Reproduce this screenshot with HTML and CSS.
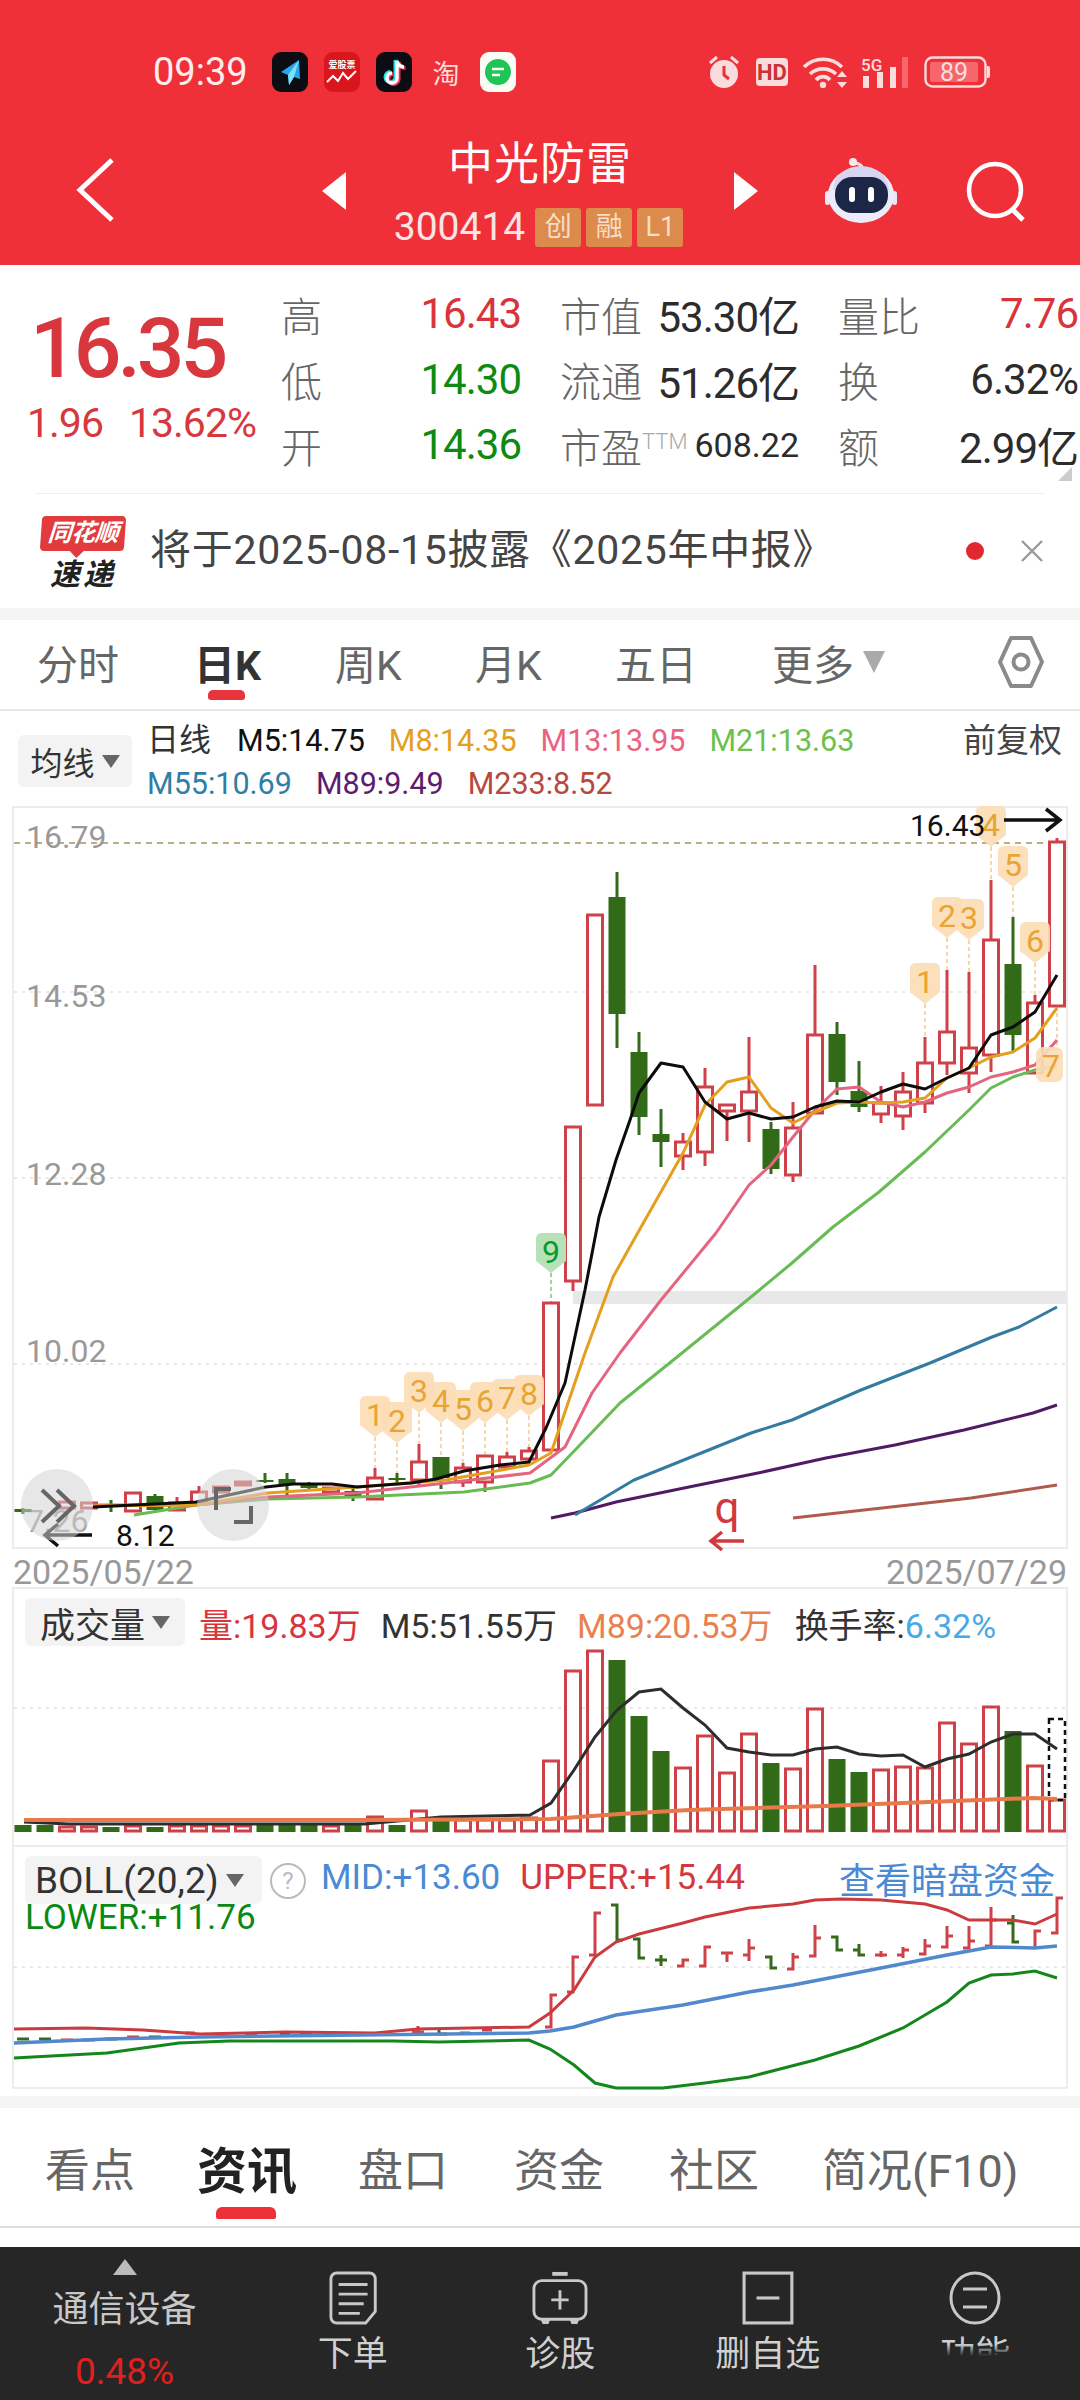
FILE: index.html
```html
<!DOCTYPE html>
<html lang="zh">
<head>
<meta charset="utf-8">
<title>中光防雷</title>
<link rel="stylesheet" href="styles.css">
</head>
<body>
<div class="app">
  <header class="top">
    <div class="status">
      <span class="clock">09:39</span>
      <div class="notif">
        <svg class="nicon" viewBox="0 0 36 40"><rect width="36" height="40" rx="9" fill="#0b0d12"/><path d="M27 8 9 20l7 3 1 10 5-8 6 2z" fill="#29a5ee"/><path d="M27 8 16 23l1 10 5-8z" fill="#7fe0f5"/></svg>
        <svg class="nicon" viewBox="0 0 36 40"><rect width="36" height="40" rx="9" fill="#d8161c"/><text x="18" y="16" class="ni-text">爱股票</text><path d="M3 30l6-6 5 5 5-8 5 6 8-8" fill="none" stroke="#fff" stroke-width="2"/></svg>
        <svg class="nicon" viewBox="0 0 36 40"><rect width="36" height="40" rx="9" fill="#0b0d12"/><path d="M21 9v17a5 5 0 1 1-5-5M21 9c1 4 4 6 7 6" fill="none" stroke="#25e0e8" stroke-width="4" transform="translate(-1.5 -1)"/><path d="M21 9v17a5 5 0 1 1-5-5M21 9c1 4 4 6 7 6" fill="none" stroke="#f0325a" stroke-width="4" transform="translate(1.5 1)"/><path d="M21 9v17a5 5 0 1 1-5-5M21 9c1 4 4 6 7 6" fill="none" stroke="#fff" stroke-width="3.4"/></svg>
        <span class="tao">淘</span>
        <svg class="nicon" viewBox="0 0 36 40"><rect width="36" height="40" rx="9" fill="#fbfbf6"/><circle cx="18" cy="20" r="13" fill="#1ec455"/><path d="M12 17h12M12 23h8" stroke="#fff" stroke-width="2.4"/></svg>
      </div>
      <div class="sys">
        <svg class="s-alarm" viewBox="0 0 32 34"><circle cx="16" cy="19" r="14" fill="#fbdcdc"/><path d="M16 11v9l5 4" fill="none" stroke="#ef3038" stroke-width="3"/><path d="M2 8 9 2M30 8 23 2" stroke="#fbdcdc" stroke-width="3" fill="none"/></svg>
        <svg class="s-hd" viewBox="0 0 32 28"><rect width="32" height="28" rx="4" fill="#fbdcdc"/><text x="16" y="22" class="hd-text">HD</text></svg>
        <svg class="s-wifi" viewBox="0 0 45 32"><path d="M1 11a27 27 0 0 1 38 0M7 18a19 19 0 0 1 26 0M13 24a9 9 0 0 1 14 0" fill="none" stroke="#fbdcdc" stroke-width="3.6"/><circle cx="20" cy="29" r="3.2" fill="#fbdcdc"/><path d="M39 15l5 6H34zM39 32l5-6H34z" fill="#fbdcdc"/></svg>
        <svg class="s-sig" viewBox="0 0 47 32"><text x="0" y="15" class="sig-text">5G</text><path d="M2 20h6v12H2zM16 16h6v16h-6zM29 11h6v21h-6z" fill="#fbdcdc"/><path d="M41 1h6v31h-6z" fill="#f6666c"/></svg>
        <svg class="s-bat" viewBox="0 0 66 32"><rect x="1.5" y="1.5" width="60" height="29" rx="7" fill="none" stroke="#fbdcdc" stroke-width="2.4"/><rect x="6" y="6" width="48" height="20" rx="2" fill="#f6666c"/><path d="M63 10h1a2 2 0 0 1 2 2v8a2 2 0 0 1-2 2h-1z" fill="#fbdcdc"/><text x="30" y="25" class="bat-text">89</text></svg>
      </div>
    </div>
    <nav class="nav">
      <div class="nav-left">
        <svg class="back" viewBox="0 0 40 64"><path d="M36 2 4 32l32 30" fill="none" stroke="#fff" stroke-width="5"/></svg>
      </div>
      <div class="nav-center">
        <span class="tri tri-l"></span>
        <div class="name">
          <div class="title">中光防雷</div>
          <div class="code-row">
            <span class="code">300414</span>
            <span class="tag">创</span><span class="tag">融</span><span class="tag">L1</span>
          </div>
        </div>
        <span class="tri tri-r"></span>
      </div>
      <div class="nav-right">
        <svg class="robot" viewBox="0 0 72 66"><path d="M37 14c2-5-3-8-8-8" fill="none" stroke="#fbdcdc" stroke-width="3"/><circle cx="28" cy="5" r="4" fill="#fbe9ec"/><rect x="0" y="34" width="5" height="14" rx="2.5" fill="#e9e6f5"/><rect x="67" y="34" width="5" height="14" rx="2.5" fill="#e9e6f5"/><ellipse cx="36" cy="38" rx="33" ry="28" fill="#ecebf9"/><path d="M8 33a28 24 0 0 1 56 0z" fill="#d7d4f0"/><rect x="10" y="20" width="53" height="36" rx="17" fill="#1c2748"/><rect x="24" y="30" width="6" height="15" rx="3" fill="#fff"/><rect x="43" y="30" width="6" height="15" rx="3" fill="#fff"/></svg>
        <svg class="search" viewBox="0 0 64 64"><circle cx="30" cy="30" r="26" fill="none" stroke="#fff" stroke-width="4.5"/><path d="M47 49l11 11" stroke="#fff" stroke-width="5"/></svg>
      </div>
    </nav>
  </header>

  <section class="quote">
    <div class="price">
      <div class="now">16.35</div>
      <div class="chg"><span>1.96</span><span>13.62%</span></div>
    </div>
    <div class="stats">
      <div class="cell"><span class="lb">高</span><span class="val red">16.43</span></div>
      <div class="cell"><span class="lb">市值</span><span class="val dark">53.30亿</span></div>
      <div class="cell"><span class="lb">量比</span><span class="val red">7.76</span></div>
      <div class="cell"><span class="lb">低</span><span class="val green">14.30</span></div>
      <div class="cell"><span class="lb">流通</span><span class="val dark">51.26亿</span></div>
      <div class="cell"><span class="lb">换</span><span class="val dark">6.32%</span></div>
      <div class="cell"><span class="lb">开</span><span class="val green">14.36</span></div>
      <div class="cell"><span class="lb">市盈<sup class="ttm">TTM</sup></span><span class="val dark small">608.22</span></div>
      <div class="cell"><span class="lb">额</span><span class="val dark">2.99亿</span></div>
    </div>
    <span class="corner"></span>
  </section>

  <section class="news">
    <div class="news-logo"><span class="nl-top"><span class="nl-name">同花顺</span></span><span class="nl-bot">速递</span></div>
    <div class="news-text">将于2025-08-15披露《2025年中报》</div>
    <span class="dot"></span>
    <svg class="close" viewBox="0 0 24 24"><path d="M2 2l20 20M22 2 2 22" stroke="#9a9a9a" stroke-width="2.4"/></svg>
  </section>
  <div class="strip"></div>

  <div class="period">
    <span>分时</span><span class="on">日K</span><span>周K</span><span>月K</span><span>五日</span>
    <span class="more">更多<i class="caret"></i></span>
    <svg class="hex" viewBox="0 0 48 54"><path d="M14 3h20l11 24-11 24H14L3 27z" fill="none" stroke="#8a8a8a" stroke-width="4" stroke-linejoin="round"/><circle cx="24" cy="27" r="7.5" fill="none" stroke="#8a8a8a" stroke-width="4"/></svg>
  </div>

  <div class="ma">
    <div class="pill pill-ma">均线<i class="caret-s"></i></div>
    <div class="ma-lines">
      <div class="ma-row"><span class="day">日线</span><span class="m5">M5:14.75</span><span class="m8">M8:14.35</span><span class="m13">M13:13.95</span><span class="m21">M21:13.63</span><span class="fq">前复权</span></div>
      <div class="ma-row"><span class="m55">M55:10.69</span><span class="m89">M89:9.49</span><span class="m233">M233:8.52</span></div>
    </div>
  </div>

  <div class="panel kline">
    <svg class="plot" width="1052" height="741" viewBox="14 808 1052 741">
      <defs><path id="bub" d="M-15 6q0-6 6-6h18q6 0 6 6v23l-15 12-15-12z"/></defs>
      <path class="grid" d="M14 992H1066M14 1178H1066M14 1364H1066"/>
      <path class="gridhi" d="M14 843H1066"/>
      <rect class="band" x="573" y="1291" width="493" height="13"/>
      <text class="axis" x="26" y="848">16.79</text>
      <text class="axis" x="26" y="1007">14.53</text>
      <text class="axis" x="26" y="1185">12.28</text>
      <text class="axis" x="26" y="1362">10.02</text>
      <text class="axis" x="26" y="1532">7.26</text>
      <path class="lead" d="M375 1437V1468M397 1443V1473M419 1413V1444M441 1423V1457M463 1431V1463M485 1423V1456M507 1420V1452M529 1416V1447M925 1004V1037M947 938V970M969 940V972M991 847V880M1013 887V917M1035 963V995M1057 1006V1050"/>
      <path class="lead-g" d="M551 1273V1303"/>
      <path class="wick-g" d="M1013 917V1052M859 1061V1112M837 1022V1095M771 1122V1174M661 1109V1167M639 1032V1135M617 872V1048M441 1457V1489M397 1473V1485M353 1488V1501M309 1482V1489M287 1473V1496M265 1473V1483M155 1494V1512M111 1500V1512M23 1508V1514"/>
      <path class="wick-r" d="M1057 838V842M1035 995V1003M991 880V1072M969 972V1093M947 970V1075M925 1037V1113M903 1072V1130M881 1086V1123M815 965V1113M793 1102V1182M749 1037V1142M727 1105V1141M705 1068V1166M683 1133V1170M573 1281V1291M529 1447V1462M507 1452V1470M485 1456V1492M463 1463V1487M419 1444V1485M375 1468V1500M177 1497V1511M199 1486V1503"/>
      <path class="body-r" d="M1049.5 842h15V1006h-15zM1027.5 1003h15V1073h-15zM983.5 940h15V1055h-15zM961.5 1048h15V1073h-15zM939.5 1032h15V1063h-15zM917.5 1063h15V1103h-15zM895.5 1092h15V1116h-15zM873.5 1103h15V1114h-15zM807.5 1035h15V1113h-15zM785.5 1128h15V1175h-15zM741.5 1092h15V1111h-15zM719.5 1105h15V1111h-15zM697.5 1087h15V1152h-15zM675.5 1142h15V1156h-15zM587.5 915h15V1105h-15zM565.5 1127h15V1281h-15zM543.5 1303h15V1450h-15zM521.5 1451h15V1459h-15zM499.5 1457h15V1467h-15zM477.5 1456h15V1482h-15zM455.5 1468h15V1482h-15zM411.5 1462h15V1480h-15zM367.5 1478h15V1499h-15zM323.5 1488h15V1492h-15zM235.5 1482h15V1485h-15zM213.5 1487h15V1492h-15zM191.5 1492h15V1503h-15zM169.5 1503h15V1510h-15zM125.5 1493h15V1511h-15zM81.5 1503h15V1508h-15zM59.5 1502h15V1508h-15z"/>
      <path class="body-g" d="M1004.5 964h17V1035h-17zM850.5 1091h17V1107h-17zM828.5 1034h17V1082h-17zM762.5 1129h17V1169h-17zM652.5 1134h17V1142h-17zM630.5 1052h17V1117h-17zM608.5 897h17V1014h-17zM432.5 1457h17V1478h-17zM388.5 1478h17V1480h-17zM344.5 1491h17V1497h-17zM300.5 1485h17V1488h-17zM278.5 1479h17V1484h-17zM256.5 1480h17V1482h-17zM146.5 1496h17V1510h-17zM102.5 1504h17V1507h-17zM14.5 1509h17V1512h-17z"/>
      <polyline class="l l233" points="793,1518 971,1498 1057,1485"/>
      <polyline class="l l89" points="551,1518 575,1513 616,1502 689,1487 758,1473 826,1458 895,1445 964,1430 1033,1413 1057,1405"/>
      <polyline class="l l55" points="575,1515 634,1480 751,1433 792,1420 861,1390 930,1363 992,1337 1019,1327 1057,1307"/>
      <polyline class="l l21" points="134,1515 196,1505 268,1499 357,1497 464,1492 530,1483 551,1475 578,1447 620,1403 682,1353 751,1297 792,1263 833,1227 879,1192 925,1152 969,1110 991,1088 1013,1077 1035,1070 1057,1066"/>
      <polyline class="l l13" points="93,1505 196,1505 268,1497 357,1493 446,1483 530,1473 565,1447 592,1393 620,1353 661,1300 716,1233 749,1185 771,1165 793,1137 815,1110 837,1089 859,1087 881,1102 903,1107 925,1102 947,1093 969,1087 991,1077 1013,1072 1035,1065 1057,1040"/>
      <polyline class="l l8" points="93,1506 196,1505 268,1493 357,1487 446,1480 529,1465 551,1453 585,1353 613,1277 645,1220 683,1153 705,1105 727,1082 749,1077 771,1108 793,1123 815,1112 837,1103 859,1102 881,1103 903,1102 925,1098 947,1078 969,1068 991,1057 1013,1052 1035,1038 1057,1008"/>
      <polyline class="l l5" points="93,1507 196,1502 266,1487 293,1484 332,1484 357,1487 411,1483 436,1479 464,1471 500,1465 529,1462 546,1428 565,1383 585,1290 599,1217 616,1160 630,1120 639,1093 661,1063 683,1067 705,1102 727,1119 749,1113 771,1119 793,1117 815,1107 837,1101 859,1102 881,1092 903,1084 925,1089 947,1078 969,1068 991,1035 1013,1027 1035,1012 1057,975"/>
      <g class="bub">
        <use href="#bub" x="375" y="1396"/><use href="#bub" x="397" y="1402"/><use href="#bub" x="419" y="1372"/><use href="#bub" x="441" y="1382"/><use href="#bub" x="463" y="1390"/><use href="#bub" x="485" y="1382"/><use href="#bub" x="507" y="1379"/><use href="#bub" x="529" y="1375"/>
        <use href="#bub" x="925" y="963"/><use href="#bub" x="947" y="897"/><use href="#bub" x="969" y="899"/><use href="#bub" x="991" y="806"/><use href="#bub" x="1013" y="846"/><use href="#bub" x="1035" y="922"/>
        <rect x="1036" y="1047" width="27" height="35" rx="7"/>
      </g>
      <path class="bub-g" d="M536 1239q0-6 6-6h18q6 0 6 6v22l-15 12-15-12z"/>
      <g class="bubt">
        <text x="375" y="1426">1</text><text x="397" y="1432">2</text><text x="419" y="1402">3</text><text x="441" y="1412">4</text><text x="463" y="1420">5</text><text x="485" y="1412">6</text><text x="507" y="1409">7</text><text x="529" y="1405">8</text>
        <text x="925" y="993">1</text><text x="947" y="927">2</text><text x="969" y="929">3</text><text x="991" y="836">4</text><text x="1013" y="876">5</text><text x="1035" y="952">6</text><text x="1051" y="1077">7</text>
      </g>
      <text class="bubt-g" x="551" y="1263">9</text>
      <text class="mk" x="910" y="836">16.43</text>
      <path class="arrow" d="M1004 820h54M1046 809l14 11-14 11"/>
      <text class="mk" x="116" y="1546">8.12</text>
      <path class="arrow" d="M92 1535H46M58 1524l-13 11 13 11"/>
      <text class="q" x="727" y="1523">q</text>
      <path class="arrow-r" d="M744 1541H711M722 1532l-11 9 11 9"/>
      <circle class="fab" cx="57" cy="1505" r="36"/>
      <circle class="fab" cx="233" cy="1505" r="36"/>
      <path class="fab-i" d="M42 1490l17 16-17 16M57 1490l17 16-17 16"/>
      <path class="fab-i" d="M216 1510v-21h15M234 1522h17v-16"/>
    </svg>
  </div>
  <div class="dates"><span>2025/05/22</span><span>2025/07/29</span></div>

  <div class="panel vol">
    <div class="ind">
      <div class="pill pill-vol">成交量<i class="caret-s"></i></div>
      <span class="v-red">量:19.83万</span><span class="v-black">M5:51.55万</span><span class="v-org">M89:20.53万</span><span class="v-black">换手率:<b class="v-blue">6.32%</b></span>
    </div>
    <svg class="plot" width="1052" height="195" viewBox="14 1650 1052 195">
      <path class="grid" d="M14 1708H1066"/>
      <path class="vbar-r" d="M1049.5 1800h15V1831h-15zM1027.5 1766h15V1831h-15zM983.5 1707h15V1831h-15zM961.5 1744h15V1831h-15zM939.5 1723h15V1831h-15zM917.5 1768h15V1831h-15zM895.5 1767h15V1831h-15zM873.5 1770h15V1831h-15zM807.5 1709h15V1831h-15zM785.5 1769h15V1831h-15zM741.5 1734h15V1831h-15zM719.5 1773h15V1831h-15zM697.5 1736h15V1831h-15zM675.5 1768h15V1831h-15zM587.5 1651h15V1831h-15zM565.5 1671h15V1831h-15zM543.5 1761h15V1831h-15zM521.5 1818h15V1831h-15zM499.5 1820h15V1831h-15zM477.5 1820h15V1831h-15zM455.5 1820h15V1831h-15zM411.5 1811h15V1831h-15zM367.5 1817h15V1831h-15zM323.5 1826h15V1831h-15zM235.5 1826h15V1831h-15zM213.5 1826h15V1831h-15zM191.5 1826h15V1831h-15zM169.5 1826h15V1831h-15zM125.5 1826h15V1831h-15zM81.5 1827h15V1831h-15zM59.5 1827h15V1831h-15z"/>
      <path class="body-g" d="M1004.5 1731h17V1832h-17zM850.5 1772h17V1832h-17zM828.5 1759h17V1832h-17zM762.5 1763h17V1832h-17zM652.5 1751h17V1832h-17zM630.5 1716h17V1832h-17zM608.5 1660h17V1832h-17zM432.5 1820h17V1832h-17zM388.5 1825h17V1832h-17zM344.5 1825h17V1832h-17zM300.5 1825h17V1832h-17zM278.5 1825h17V1832h-17zM256.5 1825h17V1832h-17zM146.5 1827h17V1832h-17zM102.5 1827h17V1832h-17zM36.5 1825h17V1832h-17zM14.5 1825h17V1832h-17z"/>
      <rect class="vbox" x="1049" y="1719" width="16" height="81"/>
      <polyline class="vl5" points="24,1822 69,1824 365,1824 441,1817 530,1815 551,1803 574,1770 595,1737 617,1710 639,1692 661,1689 683,1708 705,1725 727,1748 749,1752 771,1755 793,1755 815,1749 837,1747 859,1754 881,1756 903,1755 925,1767 947,1759 969,1754 991,1742 1013,1734 1035,1734 1057,1749"/>
      <polyline class="vl89" points="24,1820 365,1820 551,1819 620,1814 689,1810 826,1806 1033,1798 1057,1799"/>
    </svg>
  </div>

  <div class="panel boll">
    <svg class="plot" width="1052" height="242" viewBox="14 1847 1052 242">
      <path class="grid" d="M14 1967H1066"/>
      <path class="ohlc-r" d="M557 1995H551V2027h-6M579 1957H573V1992h-6M601 1913H595V1955h-6M689 1960H683V1966h-6M711 1947H705V1966h-6M733 1953H721M727 1953V1962M749 1939V1961M743 1955h6M749 1948h6M799 1957H793M793 1953V1969h-6M821 1938H815M815 1925V1956h-6M881 1951V1957M875 1955h12M903 1947V1958M897 1955h6M903 1950h6M925 1939V1954h-6M925 1946h6M947 1926V1947h-6M947 1936h6M969 1926V1948h-6M969 1941h6M991 1907V1946h-6M991 1920h6M1041 1931H1035V1947M1063 1898H1057V1933h-6M61 2040h12M83 2040h12M127 2037h12M185 2033h10M245 2034h12M300 2033h12M345 2034h12M418 2026V2033M412 2032h12M460 2033h10M482 2030h10"/>
      <path class="ohlc-g" d="M611 1905H617V1940h6M633 1939H639V1958h6M661 1955V1966M655 1960h12M765 1957H771V1968h6M831 1937H837V1950h6M859 1944V1955h6M853 1950h6M1007 1923h6M1013 1915V1942h6M17 2039h12M39 2039h12M105 2039h12M149 2037h12M280 2034h10M323 2034h10M439 2028V2034h8"/>
      <polyline class="b-up" points="14,2029 86,2028 143,2030 200,2034 286,2032 375,2033 418,2029 529,2027 550,2013 574,1990 595,1957 616,1942 639,1934 683,1923 705,1917 749,1908 793,1904 815,1900 841,1899 881,1900 925,1904 947,1910 969,1920 1013,1920 1035,1924 1057,1914"/>
      <polyline class="b-mid" points="14,2043 107,2039 200,2037 529,2033 550,2031 574,2027 616,2015 683,2005 749,1992 793,1985 881,1968 947,1955 991,1947 1035,1948 1057,1946"/>
      <polyline class="b-lo" points="14,2058 107,2053 179,2043 229,2041 393,2041 439,2042 529,2040 550,2049 574,2065 595,2083 616,2088 663,2088 705,2083 749,2077 815,2060 859,2046 903,2028 947,2002 969,1983 991,1975 1013,1974 1035,1971 1057,1978"/>
    </svg>
    <div class="ind ind-boll">
      <div class="pill pill-boll">BOLL(20,2)<i class="caret-s"></i></div>
      <span class="help">?</span>
      <span class="b-blue">MID:+13.60</span><span class="b-red">UPPER:+15.44</span>
      <span class="dark-link">查看暗盘资金</span>
      <span class="b-green">LOWER:+11.76</span>
    </div>
  </div>
  <div class="strip strip-2"></div>

  <div class="subtabs">
    <span>看点</span><span class="on">资讯</span><span>盘口</span><span>资金</span><span>社区</span><span>简况(F10)</span>
  </div>

  <footer class="bar">
    <div class="sector">
      <i class="up-tri"></i>
      <span class="sec-name">通信设备</span>
      <span class="sec-val">0.48%</span>
    </div>
    <div class="act">
      <svg class="ic" viewBox="0 0 50 56"><path d="M8 2h34a6 6 0 0 1 6 6v34l-10 12H8a6 6 0 0 1-6-6V8a6 6 0 0 1 6-6z" fill="none" stroke="#c8c8c8" stroke-width="3"/><path d="M10 14h30M10 24h30M10 34h26M10 44h22" stroke="#c8c8c8" stroke-width="3"/></svg>
      <span>下单</span>
    </div>
    <div class="act">
      <svg class="ic" viewBox="0 0 58 56"><path d="M21 3h16" stroke="#c8c8c8" stroke-width="4"/><rect x="2" y="10" width="54" height="40" rx="8" fill="none" stroke="#c8c8c8" stroke-width="3"/><path d="M29 20v20M20 30h18" stroke="#c8c8c8" stroke-width="3"/><path d="M9 50l2 5h6l2-5M39 50l2 5h6l2-5" fill="#c8c8c8"/></svg>
      <span>诊股</span>
    </div>
    <div class="act">
      <svg class="ic" viewBox="0 0 50 52"><rect x="2" y="2" width="46" height="48" fill="none" stroke="#c8c8c8" stroke-width="3"/><path d="M14 26h22" stroke="#c8c8c8" stroke-width="3"/></svg>
      <span>删自选</span>
    </div>
    <div class="act">
      <svg class="ic" viewBox="0 0 52 54"><ellipse cx="26" cy="27" rx="24" ry="25" fill="none" stroke="#c8c8c8" stroke-width="3"/><path d="M14 18h24M14 36h24" stroke="#c8c8c8" stroke-width="3"/></svg>
      <span>功能</span>
    </div>
    <div class="mark"></div>
  </footer>
</div>
</body>
</html>
```

FILE: styles.css
```css
* { box-sizing: border-box; }
html, body { margin: 0; padding: 0; background: #fff; }
body { font-family: Roboto, "Noto Sans CJK SC", sans-serif; color: #333; }
.app { width: 1080px; height: 2400px; position: relative; overflow: hidden; display: flex; flex-direction: column; background: #fff; }

/* header */
.top { height: 265px; padding-top: 50px; background: #ef3038; color: #fff; flex: none; }
.status { height: 44px; padding: 0 90px 0 153px; display: flex; align-items: center; }
.clock { font-size: 38px; color: #fdeeee; width: 119px; white-space: nowrap; }
.notif { display: flex; align-items: center; gap: 16px; }
.nicon { width: 36px; height: 40px; }
.ni-text { font-size: 9px; fill: #fff; text-anchor: middle; font-weight: 700; }
.tao { font-size: 27px; color: #fbdcdc; width: 36px; text-align: center; }
.sys { margin-left: auto; display: flex; align-items: center; gap: 15px; }
.s-alarm { width: 32px; height: 34px; }
.s-hd { width: 32px; height: 28px; margin-left: 1px; }
.s-wifi { width: 45px; height: 32px; }
.s-sig { width: 47px; height: 32px; margin-left: -2px; }
.s-bat { width: 66px; height: 32px; margin-left: 1px; }
.hd-text { font-size: 22px; font-weight: 700; fill: #c8323a; text-anchor: middle; }
.sig-text { font-size: 17px; fill: #fbdcdc; font-weight: 500; }
.bat-text { font-size: 25px; fill: #fbdcdc; text-anchor: middle; }

.nav { height: 171px; display: grid; grid-template-columns: 1fr 436px 1fr; align-items: start; }
.nav-left { padding: 64px 0 0 76px; }
.back { width: 40px; height: 64px; display: block; }
.nav-center { display: flex; justify-content: space-between; align-items: flex-start; }
.tri { width: 0; height: 0; margin-top: 78px; border-top: 19px solid transparent; border-bottom: 19px solid transparent; }
.tri-l { border-right: 24px solid #fff; }
.tri-r { border-left: 24px solid #fff; }
.name { display: flex; flex-direction: column; align-items: center; padding-top: 47px; }
.title { font-size: 45px; line-height: 48px; letter-spacing: 1px; white-space: nowrap; }
.code-row { display: flex; align-items: center; margin-top: 18px; height: 40px; margin-left: -3px; }
.code { font-size: 39px; color: #f9e5e5; margin-right: 10px; }
.tag { width: 46px; height: 39px; line-height: 39px; margin-right: 5px; text-align: center; background: #dc8b4c; border-radius: 3px; color: #f6dfc8; font-size: 27px; }
.tag:last-child { margin-right: 0; }
.nav-right { display: flex; align-items: flex-start; justify-content: flex-end; padding: 63px 51px 0 0; gap: 68px; }
.robot { width: 72px; height: 66px; }
.search { width: 64px; height: 64px; margin-top: 3px; }

/* quote */
.quote { height: 229px; flex: none; padding: 16px 0 0 0; display: flex; position: relative; }
.quote::after { content: ""; position: absolute; left: 35px; right: 35px; bottom: 0; height: 1px; background: #eee; }
.price { width: 281px; flex: none; padding-left: 30px; color: #d8383d; white-space: nowrap; }
.now { font-size: 84px; line-height: 86px; margin-top: 25px; letter-spacing: -4px; font-weight: 500; }
.chg { margin-top: 8px; font-size: 41px; line-height: 46px; display: flex; gap: 26px; margin-left: -3px; letter-spacing: -1px; }
.stats { width: 810px; flex: none; display: grid; grid-template-columns: 240px 239px 240px; column-gap: 39px; grid-auto-rows: 65.5px; }
.cell { display: flex; justify-content: space-between; align-items: center; white-space: nowrap; }
.lb { font-size: 41px; color: #666; font-weight: 300; }
.val { font-size: 42px; letter-spacing: -1px; }
.val.small { font-size: 34px; letter-spacing: 0; }
.red { color: #d9343c; }
.green { color: #0c8a12; }
.dark { color: #2c2c2c; }
.ttm { font-size: 22px; color: #aaa; vertical-align: 14px; line-height: 0; }
.corner { position: absolute; right: 8px; bottom: 13px; width: 0; height: 0; border-left: 14px solid transparent; border-bottom: 14px solid #ccc; }

/* news */
.news { height: 114px; flex: none; display: flex; align-items: center; padding-left: 41px; }
.news-logo { width: 84px; flex: none; display: flex; flex-direction: column; align-items: center; padding-top: 4px; }
.nl-top { width: 84px; height: 35px; background: #e23b3e; border-radius: 4px; transform: skewX(-4deg); color: #fff; text-align: center; position: relative; }
.nl-name { font-size: 24px; font-weight: 700; font-style: italic; line-height: 35px; white-space: nowrap; letter-spacing: -0.5px; display: block; }
.nl-top::after { content: ""; position: absolute; left: 30px; bottom: -7px; border-top: 7px solid #e23b3e; border-left: 7px solid transparent; border-right: 7px solid transparent; }
.nl-bot { font-size: 30px; line-height: 30px; margin-top: 9px; font-weight: 700; font-style: italic; color: #222; letter-spacing: 3px; white-space: nowrap; }
.news-text { font-size: 41px; line-height: 48px; color: #444; margin: -2px 0 0 25px; white-space: nowrap; letter-spacing: 0.7px; }
.dot { width: 18px; height: 18px; border-radius: 50%; background: #e0282e; margin-left: auto; }
.close { width: 24px; height: 24px; margin: 0 36px 0 36px; }
.strip { height: 12px; background: #f5f5f5; flex: none; }

/* period tabs */
.period { height: 91px; flex: none; display: grid; grid-template-columns: 160px 138px 140px 140px 157px 225px 48px; padding: 0 0 6px 37px; align-items: center; font-size: 41px; color: #666; border-bottom: 2px solid #e8e8e8; position: relative; white-space: nowrap; }
.period .on { color: #333; font-weight: 700; position: relative; margin-left: -3px; }
.period .on::after { content: ""; position: absolute; left: 14px; top: 58px; width: 37px; height: 10px; background: #e8343b; border-radius: 5px 5px 3px 3px; }
.caret { display: inline-block; vertical-align: 7px; margin-left: 9px; border-top: 22px solid #aaa; border-left: 11px solid transparent; border-right: 11px solid transparent; }
.hex { width: 48px; height: 54px; }

/* ma legend */
.ma { height: 95px; flex: none; display: flex; padding-left: 18px; }
.pill { background: #f3f3f3; border-radius: 6px; color: #333; display: flex; align-items: center; justify-content: center; white-space: nowrap; }
.pill-ma { width: 114px; height: 52px; margin-top: 24px; font-size: 32px; }
.caret-s { display: inline-block; margin-left: 7px; border-top: 13px solid #666; border-left: 9px solid transparent; border-right: 9px solid transparent; }
.ma-lines { flex: 1; padding-left: 15px; font-size: 30.5px; line-height: 43px; margin-top: 8px; }
.ma-row { display: flex; gap: 24px; white-space: nowrap; }
.day { color: #333; margin-right: 2px; font-size: 32px; }
.m5 { color: #111; } .m8 { color: #e3a01f; } .m13 { color: #e8647f; } .m21 { color: #6cc04c; }
.m55 { color: #2f7ea8; } .m89 { color: #5d1c6e; } .m233 { color: #b54a3c; }
.fq { margin-left: auto; margin-right: 18px; color: #444; font-size: 33px; }

/* panels */
.panel { margin: 0 12px; border: 2px solid #ececec; border-bottom: 0; flex: none; position: relative; }
.kline { border-bottom: 2px solid #ececec; height: 743px; }
.plot { display: block; overflow: visible; }
.dates { height: 38px; flex: none; padding: 7px 13px 0; display: flex; justify-content: space-between; align-items: center; font-size: 34px; color: #999; }
.grid { stroke: #e8e8e8; stroke-width: 2; stroke-dasharray: 3 5; fill: none; }
.gridhi { stroke: #b9ae85; stroke-width: 2; stroke-dasharray: 6 5; fill: none; }
.band { fill: #e8e8e8; }
.axis { font-size: 32px; fill: #999; font-family: Roboto, sans-serif; }
.lead { stroke: #efc98f; stroke-width: 1.5; stroke-dasharray: 4 3; fill: none; }
.lead-g { stroke: #7cc38a; stroke-width: 1.5; stroke-dasharray: 4 3; fill: none; }
.wick-g { stroke: #336b1a; stroke-width: 3; fill: none; }
.wick-r { stroke: #cf4149; stroke-width: 3; fill: none; }
.body-r { fill: #fff; stroke: #cf4149; stroke-width: 3; }
.body-g { fill: #326b18; }
.l { fill: none; stroke-linejoin: round; }
.l5 { stroke: #0c0c0c; stroke-width: 3; }
.l8 { stroke: #e59f1f; stroke-width: 3; }
.l13 { stroke: #e5647f; stroke-width: 3; }
.l21 { stroke: #69bb54; stroke-width: 3; }
.l55 { stroke: #337ba0; stroke-width: 3; }
.l89 { stroke: #4f1b62; stroke-width: 3; }
.l233 { stroke: #b05a4d; stroke-width: 3; }
.bub { fill: #fcdcb5; fill-opacity: .92; }
.bub-g { fill: #b6e1b9; }
.bubt { font-size: 32px; fill: #e9a534; text-anchor: middle; font-family: Roboto, sans-serif; }
.bubt-g { font-size: 32px; fill: #0a9a30; text-anchor: middle; font-family: Roboto, sans-serif; }
.mk { font-size: 30px; fill: #111; font-family: Roboto, sans-serif; }
.arrow { stroke: #111; stroke-width: 3.5; fill: none; }
.arrow-r { stroke: #d2383e; stroke-width: 3.5; fill: none; }
.q { font-size: 44px; fill: #d2383e; text-anchor: middle; font-family: Roboto, sans-serif; }
.fab { fill: #d4d4d4; fill-opacity: .55; }
.fab-i { stroke: #666; stroke-width: 4; fill: none; }

/* volume */
.vol { height: 258px; }
.ind { height: 61px; display: flex; align-items: flex-start; padding: 9px 0 0 11px; font-size: 34px; white-space: nowrap; }
.ind > span { margin-top: 1px; }
.pill-vol { width: 160px; height: 48px; font-size: 35px; margin-right: 14px; }
.v-red { color: #d9343c; margin-right: 20px; }
.v-black { color: #333; margin-right: 20px; }
.v-org { color: #e8814f; margin-right: 22px; }
.v-blue { color: #49a9e2; font-weight: 400; }
.vbar-r { fill: #fff; stroke: #cf4149; stroke-width: 3; }
.vbox { fill: none; stroke: #111; stroke-width: 2.5; stroke-dasharray: 5 4; }
.vl5 { fill: none; stroke: #2d2d2d; stroke-width: 3; }
.vl89 { fill: none; stroke: #e8794a; stroke-width: 4; }

/* boll */
.boll { height: 244px; border-bottom: 2px solid #ececec; margin-bottom: 7px; }
.ind-boll { position: absolute; left: 0; top: 0; width: 100%; height: auto; flex-wrap: wrap; padding-top: 9px; font-size: 35px; }
.pill-boll { width: 237px; height: 48px; margin-right: 8px; font-size: 37px; justify-content: flex-start; padding-left: 10px; }
.help { width: 36px; height: 36px; border: 2px solid #bbb; border-radius: 50%; color: #bbb; font-size: 24px; line-height: 32px; text-align: center; margin-top: 7px !important; margin-right: 15px; }
.b-blue { color: #4a8ad4; margin-right: 20px; }
.b-red { color: #d2383e; }
.dark-link { color: #4a8ad4; position: absolute; right: 11px; top: 4px; font-size: 36px; }
.b-green { color: #0a8a14; width: 100%; margin-top: -6px !important; line-height: 40px; }
.b-up { fill: none; stroke: #ca3b40; stroke-width: 3; }
.b-mid { fill: none; stroke: #5288cc; stroke-width: 3.5; }
.b-lo { fill: none; stroke: #15861b; stroke-width: 3; }
.ohlc-r { fill: none; stroke: #cf4149; stroke-width: 3; }
.ohlc-g { fill: none; stroke: #336b1a; stroke-width: 3; }
.strip-2 { height: 12px; }

/* sub tabs */
.subtabs { height: 120px; flex: none; display: grid; grid-template-columns: 152px 161px 156px 155px 153px auto; padding-left: 45px; align-items: center; font-size: 45px; color: #666; border-bottom: 2px solid #ddd; white-space: nowrap; }
.subtabs .on { color: #222; font-size: 50px; font-weight: 700; position: relative; }
.subtabs .on::after { content: ""; position: absolute; left: 19px; top: 76px; width: 60px; height: 12px; background: #ef3137; border-radius: 6px 6px 2px 2px; }

/* bottom bar */
.bar { position: absolute; left: 0; right: 0; top: 2247px; height: 153px; background: #262626; display: grid; grid-template-columns: 249px repeat(4, 207.5px); color: #ccc; overflow: hidden; }
.sector { display: flex; flex-direction: column; align-items: center; padding-top: 12px; }
.up-tri { border-bottom: 16px solid #bbb; border-left: 12px solid transparent; border-right: 12px solid transparent; }
.sec-name { font-size: 36px; line-height: 40px; margin-top: 15px; color: #c8c8c8; white-space: nowrap; }
.sec-val { font-size: 37px; line-height: 40px; margin-top: 22px; color: #e11f1f; }
.act { display: flex; flex-direction: column; align-items: center; font-size: 35px; color: #d0d0d0; }
.ic { height: 54px; margin-top: 24px; }
.act span { margin-top: 6px; line-height: 48px; white-space: nowrap; }
.mark { position: absolute; left: 880px; top: 97px; width: 200px; height: 56px; background: linear-gradient(180deg, rgba(38,38,38,0) 0, #262626 12px); }
```
